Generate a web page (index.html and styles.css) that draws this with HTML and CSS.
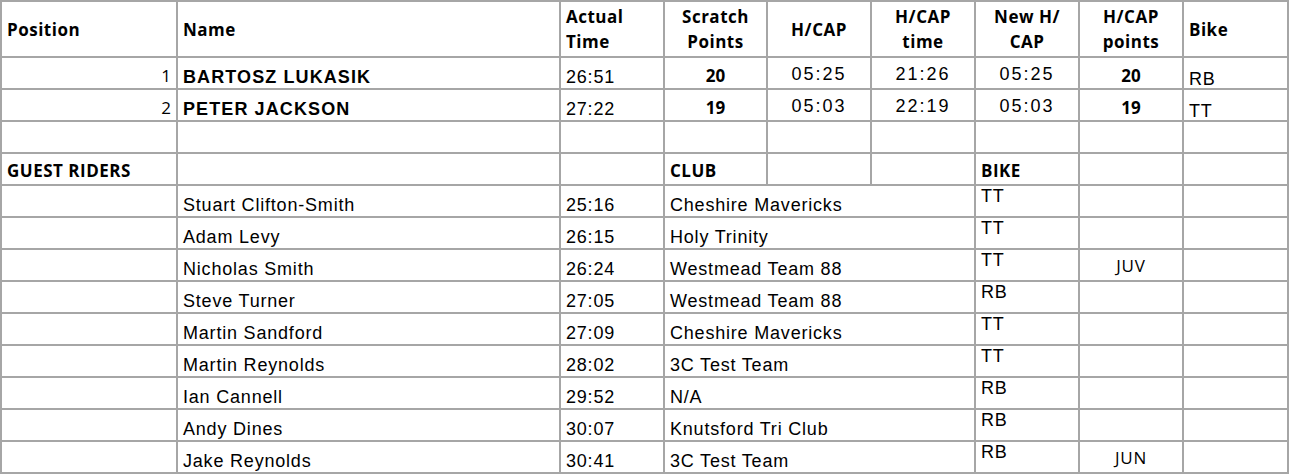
FILE: index.html
```html
<!DOCTYPE html>
<html lang="en">
<head>
<meta charset="utf-8">
<title>Results</title>
<link rel="stylesheet" href="styles.css">
</head>
<body>
<div class="sheet" role="table">
  <div class="row" role="row">
    <div class="cell hd">Position</div>
    <div class="cell hd">Name</div>
    <div class="cell hd"><span>Actual<br>Time</span></div>
    <div class="cell hd ctr"><span>Scratch<br>Points</span></div>
    <div class="cell hd ctr">H/CAP</div>
    <div class="cell hd ctr"><span>H/CAP<br>time</span></div>
    <div class="cell hd ctr"><span>New H/<br>CAP</span></div>
    <div class="cell hd ctr"><span>H/CAP<br>points</span></div>
    <div class="cell hd">Bike</div>
  </div>

  <div class="row" role="row">
    <div class="cell num">1</div>
    <div class="cell strong">BARTOSZ LUKASIK</div>
    <div class="cell">26:51</div>
    <div class="cell pts">20</div>
    <div class="cell mid">05:25</div>
    <div class="cell mid">21:26</div>
    <div class="cell mid">05:25</div>
    <div class="cell pts">20</div>
    <div class="cell low">RB</div>
  </div>

  <div class="row" role="row">
    <div class="cell num">2</div>
    <div class="cell strong">PETER JACKSON</div>
    <div class="cell">27:22</div>
    <div class="cell pts">19</div>
    <div class="cell mid">05:03</div>
    <div class="cell mid">22:19</div>
    <div class="cell mid">05:03</div>
    <div class="cell pts">19</div>
    <div class="cell low">TT</div>
  </div>

  <div class="row" role="row">
    <div class="cell"></div><div class="cell"></div><div class="cell"></div>
    <div class="cell"></div><div class="cell"></div><div class="cell"></div>
    <div class="cell"></div><div class="cell"></div><div class="cell"></div>
  </div>

  <div class="row" role="row">
    <div class="cell sub">GUEST RIDERS</div>
    <div class="cell"></div>
    <div class="cell"></div>
    <div class="cell sub">CLUB</div>
    <div class="cell"></div>
    <div class="cell"></div>
    <div class="cell sub">BIKE</div>
    <div class="cell"></div>
    <div class="cell"></div>
  </div>

  <div class="row" role="row">
    <div class="cell"></div>
    <div class="cell">Stuart Clifton-Smith</div>
    <div class="cell">25:16</div>
    <div class="cell club">Cheshire Mavericks</div>
    <div class="cell top">TT</div>
    <div class="cell cat"></div>
    <div class="cell"></div>
  </div>

  <div class="row" role="row">
    <div class="cell"></div>
    <div class="cell">Adam Levy</div>
    <div class="cell">26:15</div>
    <div class="cell club">Holy Trinity</div>
    <div class="cell top">TT</div>
    <div class="cell cat"></div>
    <div class="cell"></div>
  </div>

  <div class="row" role="row">
    <div class="cell"></div>
    <div class="cell">Nicholas Smith</div>
    <div class="cell">26:24</div>
    <div class="cell club">Westmead Team 88</div>
    <div class="cell top">TT</div>
    <div class="cell cat">JUV</div>
    <div class="cell"></div>
  </div>

  <div class="row" role="row">
    <div class="cell"></div>
    <div class="cell">Steve Turner</div>
    <div class="cell">27:05</div>
    <div class="cell club">Westmead Team 88</div>
    <div class="cell top">RB</div>
    <div class="cell cat"></div>
    <div class="cell"></div>
  </div>

  <div class="row" role="row">
    <div class="cell"></div>
    <div class="cell">Martin Sandford</div>
    <div class="cell">27:09</div>
    <div class="cell club">Cheshire Mavericks</div>
    <div class="cell top">TT</div>
    <div class="cell cat"></div>
    <div class="cell"></div>
  </div>

  <div class="row" role="row">
    <div class="cell"></div>
    <div class="cell">Martin Reynolds</div>
    <div class="cell">28:02</div>
    <div class="cell club">3C Test Team</div>
    <div class="cell top">TT</div>
    <div class="cell cat"></div>
    <div class="cell"></div>
  </div>

  <div class="row" role="row">
    <div class="cell"></div>
    <div class="cell">Ian Cannell</div>
    <div class="cell">29:52</div>
    <div class="cell club">N/A</div>
    <div class="cell top">RB</div>
    <div class="cell cat"></div>
    <div class="cell"></div>
  </div>

  <div class="row" role="row">
    <div class="cell"></div>
    <div class="cell">Andy Dines</div>
    <div class="cell">30:07</div>
    <div class="cell club">Knutsford Tri Club</div>
    <div class="cell top">RB</div>
    <div class="cell cat"></div>
    <div class="cell"></div>
  </div>

  <div class="row" role="row">
    <div class="cell"></div>
    <div class="cell">Jake Reynolds</div>
    <div class="cell">30:41</div>
    <div class="cell club">3C Test Team</div>
    <div class="cell top">RB</div>
    <div class="cell cat">JUN</div>
    <div class="cell"></div>
  </div>
</div>
</body>
</html>
```

FILE: styles.css
```css
html, body {
  margin: 0;
  padding: 0;
  background: #ffffff;
}

.sheet {
  display: grid;
  grid-template-columns: 174px 381px 102px 101px 102px 102px 102px 102px 103px;
  grid-template-rows: 54px repeat(13, 30px);
  gap: 2px;
  padding: 2px;
  width: max-content;
  background: #a6a6a6;
}

.row {
  display: contents;
}

.cell {
  background: #ffffff;
  display: flex;
  align-items: flex-end;
  padding: 0 5px 1px;
  font-family: "Liberation Sans", Arial, sans-serif;
  font-size: 18px;
  line-height: 20px;
  letter-spacing: 0.8px;
  color: #000000;
  white-space: nowrap;
}

.hd {
  font-family: "Open Sans", "Noto Sans", sans-serif;
  font-size: 17px;
  font-weight: 700;
  letter-spacing: 0.5px;
  line-height: 25px;
  align-items: center;
  padding-bottom: 0;
}

.ctr {
  justify-content: center;
  text-align: center;
}

.num {
  font-family: "Open Sans", "Noto Sans", sans-serif;
  font-size: 17px;
  letter-spacing: 0;
  justify-content: flex-end;
  padding-bottom: 2px;
}

.strong {
  font-weight: 700;
  letter-spacing: 1.1px;
}

.pts {
  font-family: "Open Sans", "Noto Sans", sans-serif;
  font-size: 17px;
  font-weight: 700;
  letter-spacing: 0;
  justify-content: center;
  padding-bottom: 2px;
}

.mid {
  justify-content: center;
  letter-spacing: 2px;
  padding-bottom: 4px;
}

.low {
  align-items: flex-start;
  padding-top: 11px;
  padding-bottom: 0;
}

.sub {
  font-family: "Open Sans", "Noto Sans", sans-serif;
  font-size: 17px;
  font-weight: 700;
  letter-spacing: 0.5px;
  padding-bottom: 3px;
}

.club {
  grid-column: span 3;
}

.top {
  align-items: flex-start;
  padding-top: 0;
}

.cat {
  font-family: "Open Sans", "Noto Sans", sans-serif;
  font-size: 17px;
  letter-spacing: 0.8px;
  justify-content: center;
  padding-bottom: 4px;
}
```
